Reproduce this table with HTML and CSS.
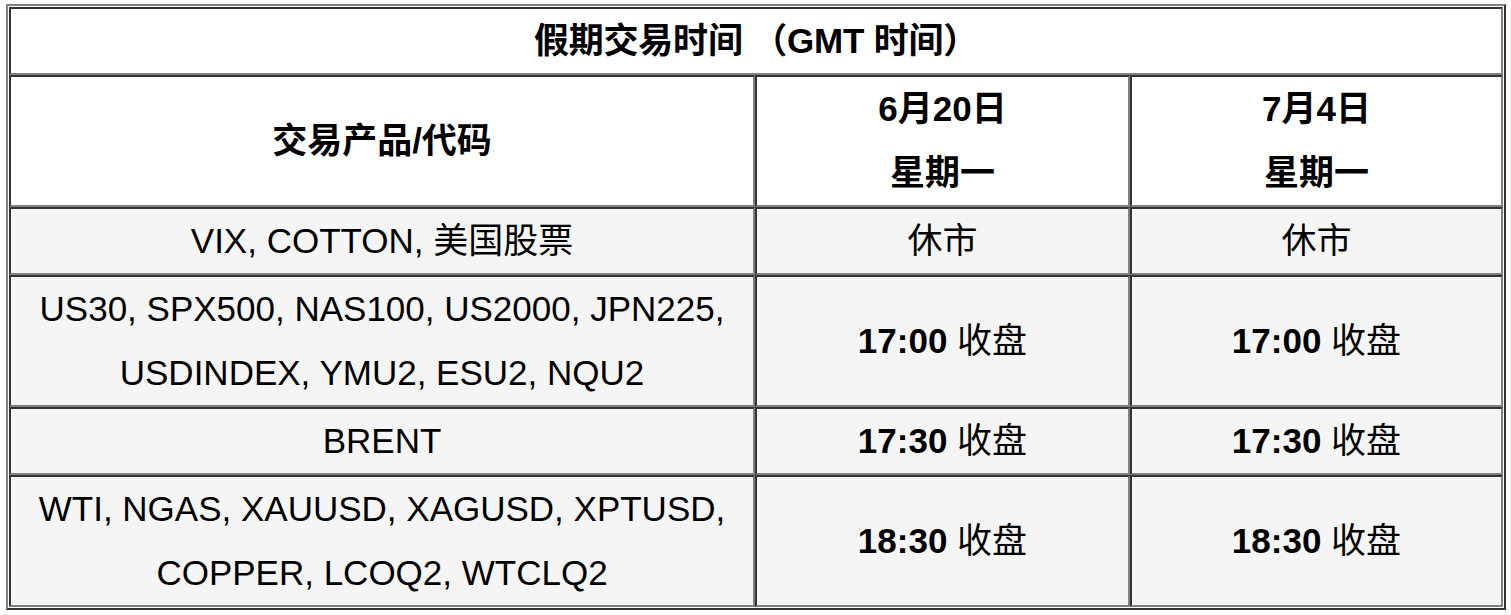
FILE: index.html
```html
<!DOCTYPE html>
<html lang="zh-CN">
<head>
<meta charset="utf-8">
<title>假期交易时间</title>
<link rel="stylesheet" href="styles.css">
</head>
<body>
<table class="schedule">
  <colgroup>
    <col class="col-product">
    <col class="col-day">
    <col class="col-day-last">
  </colgroup>
  <thead>
    <tr class="head-row">
      <th colspan="3" class="title single">假期交易时间 （GMT 时间）</th>
    </tr>
    <tr class="head-row">
      <th class="double">交易产品/代码</th>
      <th class="double">6月20日<br>星期一</th>
      <th class="double">7月4日<br>星期一</th>
    </tr>
  </thead>
  <tbody>
    <tr class="body-row">
      <td class="single">VIX, COTTON, 美国股票</td>
      <td class="single">休市</td>
      <td class="single">休市</td>
    </tr>
    <tr class="body-row">
      <td class="double">US30, SPX500, NAS100, US2000, JPN225,<br>USDINDEX, YMU2, ESU2, NQU2</td>
      <td class="double"><b class="time">17:00</b> 收盘</td>
      <td class="double"><b class="time">17:00</b> 收盘</td>
    </tr>
    <tr class="body-row">
      <td class="single">BRENT</td>
      <td class="single"><b class="time">17:30</b> 收盘</td>
      <td class="single"><b class="time">17:30</b> 收盘</td>
    </tr>
    <tr class="body-row">
      <td class="double">WTI, NGAS, XAUUSD, XAGUSD, XPTUSD,<br>COPPER, LCOQ2, WTCLQ2</td>
      <td class="double"><b class="time">18:30</b> 收盘</td>
      <td class="double"><b class="time">18:30</b> 收盘</td>
    </tr>
  </tbody>
</table>
</body>
</html>
```

FILE: styles.css
```css
html, body {
  background: #ffffff;
}
body {
  margin: 4px 5px 0 6px;
  font-family: "Liberation Sans", "Noto Sans CJK SC", sans-serif;
  font-size: 35px;
  color: #000000;
}
.schedule {
  width: 1500px;
  table-layout: fixed;
  border-collapse: separate;
  border-spacing: 0;
  padding: 1px;
  border-style: solid;
  border-width: 2px;
  border-color: #808080 #333333 #333333 #808080;
}
.col-product { width: 746px; }
.col-day { width: 375px; }
.col-day-last { width: 373px; }

.schedule th,
.schedule td {
  border-style: solid;
  border-width: 2px;
  border-color: #333333 #808080 #808080 #333333;
  padding: 0;
  text-align: center;
  vertical-align: middle;
  line-height: 64px;
}
.schedule th { font-weight: bold; }
.schedule td { font-weight: normal; }
.title { letter-spacing: -0.2px; }
.single { height: 64px; }
.double { height: 128px; }
.head-row { background: #ffffff; }
.body-row { background: #f5f5f5; }
.time { font-weight: bold; }
```
